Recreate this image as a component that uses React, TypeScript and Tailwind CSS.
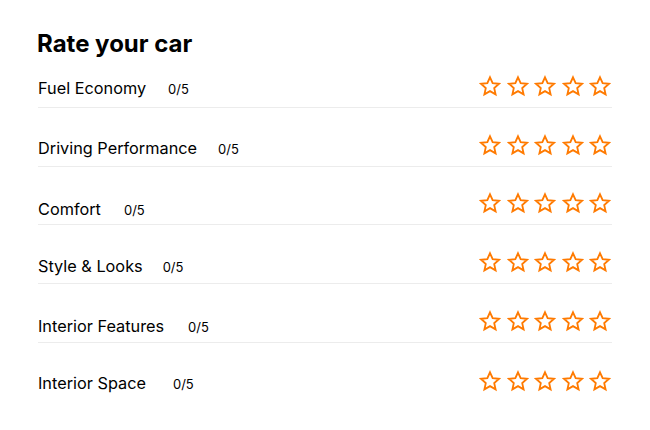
import React from "react";

const categories: { name: string; gap: string; lift: string; h: string }[] = [
  { name: "Fuel Economy", gap: "ml-[22px]", lift: "mb-[3px]", h: "h-[49px]" },
  { name: "Driving Performance", gap: "ml-[21px]", lift: "mb-[2px]", h: "h-[59px]" },
  { name: "Comfort", gap: "ml-[23px]", lift: "-mb-[1px]", h: "h-[58px]" },
  { name: "Style & Looks", gap: "ml-[20px]", lift: "mb-[1px]", h: "h-[59px]" },
  { name: "Interior Features", gap: "ml-[24px]", lift: "mb-[0px]", h: "h-[59px]" },
  { name: "Interior Space", gap: "ml-[27px]", lift: "mb-[3px]", h: "h-[59px]" },
];

function StarIcon() {
  return (
    <svg width="22" height="22" viewBox="0 0 24 24" fill="none" stroke="#ff7a00" strokeWidth="2" strokeLinejoin="miter">
      <polygon points="12,2.5 14.9,8.9 21.8,9.6 16.6,14.3 18.1,21.1 12,17.6 5.9,21.1 7.4,14.3 2.2,9.6 9.1,8.9" />
    </svg>
  );
}

export default function App() {
  return (
    <div className="w-[650px] h-[430px] bg-white pl-[38px] pr-[38px] pt-[29px]" style={{ fontFamily: "Inter, 'Noto Sans', sans-serif" }}>
      <h1 className="text-[24px] font-bold text-black leading-[30px] -ml-[1px]">Rate your car</h1>
      <div className="w-[574px]">
        {categories.map((c, i) => (
          <div
            key={c.name}
            className={`flex items-end justify-between pb-[5px] ${c.h} ${i < categories.length - 1 ? "border-b border-[#ececec]" : ""}`}
          >
            <div className={`flex items-baseline leading-[20px] text-black ${c.lift}`}>
              <span className="text-[16.3px]">{c.name}</span>
              <span className={`text-[13px] ${c.gap}`}>0/5</span>
            </div>
            <div className="flex items-center gap-[5.5px] mr-[1px] mb-[5px]">
              {[0, 1, 2, 3, 4].map((s) => (
                <StarIcon key={s} />
              ))}
            </div>
          </div>
        ))}
      </div>
    </div>
  );
}
